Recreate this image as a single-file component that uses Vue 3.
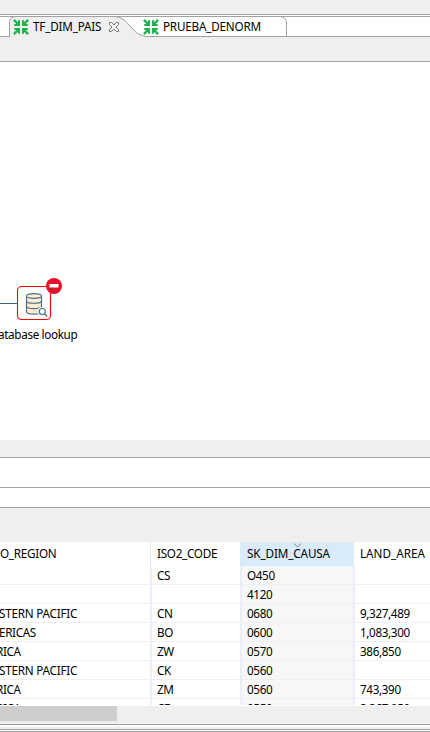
<script setup>
const columns = [
  { key: 'region', label: 'O_REGION' },
  { key: 'iso', label: 'ISO2_CODE' },
  { key: 'sk', label: 'SK_DIM_CAUSA', sorted: true },
  { key: 'area', label: 'LAND_AREA' },
]
const rows = [
  { region: '', iso: 'CS', sk: 'O450', area: '' },
  { region: '', iso: '', sk: '4120', area: '' },
  { region: 'STERN PACIFIC', iso: 'CN', sk: '0680', area: '9,327,489' },
  { region: 'ERICAS', iso: 'BO', sk: '0600', area: '1,083,300' },
  { region: 'RICA', iso: 'ZW', sk: '0570', area: '386,850' },
  { region: 'STERN PACIFIC', iso: 'CK', sk: '0560', area: '' },
  { region: 'RICA', iso: 'ZM', sk: '0560', area: '743,390' },
  { region: 'RICA', iso: 'CF', sk: '0550', area: '2,267,050' },
]
const arrows = [0, 90, 180, 270]
</script>

<template>
  <main class="app">
    <div class="top-strip"></div>
    <nav class="tabs">
      <svg class="tab-shape" width="430" height="22" viewBox="0 0 430 22">
        <path d="M0 .5H430" stroke="#a0a0a0" fill="none" />
        <path d="M9.500 21V7Q9.500 .5 16 .5H115C130 2 131 19 146 20.500V21Z" fill="#efefef" />
        <path d="M0 20.500H9.500V7Q9.500 .5 16 .5H115C130 2 131 19 146 20.500H430M280 .5Q286.500 1.500 286.500 7V20" fill="none" stroke="#a0a0a0" />
      </svg>
      <div class="tab first">
        <svg class="arrows" width="16" height="16" viewBox="0 0 16 16">
          <g v-for="a in arrows" :key="a" :transform="`rotate(${a} 8 8)`" fill="#22b14c">
            <path d="M0 1.700L1.700 0L5 3.300V1.300H7V7H1.300V5H3.300Z" />
          </g>
        </svg>
        <span class="tab-label">TF_DIM_PAIS</span>
        <svg class="close" width="12" height="12" viewBox="0 0 12 12">
          <path d="M1.500 1.500H3.500L6 4L8.500 1.500H10.500V3.500L8 6L10.500 8.500V10.500H8.500L6 8L3.500 10.500H1.500V8.500L4 6L1.500 3.500Z" fill="#fff" stroke="#777" />
        </svg>
      </div>
      <div class="tab second">
        <svg class="arrows" width="16" height="16" viewBox="0 0 16 16">
          <g v-for="a in arrows" :key="a" :transform="`rotate(${a} 8 8)`" fill="#22b14c">
            <path d="M0 1.700L1.700 0L5 3.300V1.300H7V7H1.300V5H3.300Z" />
          </g>
        </svg>
        <span class="tab-label">PRUEBA_DENORM</span>
      </div>
    </nav>
    <div class="toolbar"></div>
    <section class="canvas">
      <svg class="step" width="70" height="60" viewBox="0 270 70 60">
        <path d="M0 303.500H17" stroke="#3d6480" />
        <rect x="17.500" y="286.500" width="33" height="33" rx="4" fill="#fff" stroke="#ff0000" stroke-width="1.100" />
        <path d="M26.500 296V311.500C26.500 315 41.500 315 41.500 311.500V296" fill="#ffebcd" stroke="#4c718e" stroke-width="1.200" />
        <ellipse cx="34" cy="296" rx="7.500" ry="2.300" fill="#ffebcd" stroke="#4c718e" stroke-width="1.200" />
        <path d="M26.500 301C26.500 304 41.500 304 41.500 301M26.500 306C26.500 309.500 41.500 309.500 41.500 306" fill="none" stroke="#4c718e" stroke-width="1.200" />
        <circle cx="42.300" cy="311.500" r="4.500" fill="#fff" />
        <circle cx="42.300" cy="311.500" r="3" fill="#fff" stroke="#4c718e" stroke-width="1.200" />
        <path d="M44.500 313.800L47.200 316.500" stroke="#4c718e" stroke-width="1.300" />
        <circle cx="54" cy="286" r="8" fill="#e8112d" />
        <rect x="49.500" y="284" width="9" height="3.500" fill="#fff" />
      </svg>
      <span class="step-label">atabase lookup</span>
    </section>
    <div class="sash"></div>
    <div class="panel-title"></div>
    <div class="panel-tabs"></div>
    <div class="panel-tools"></div>
    <section class="grid">
      <div class="row head">
        <div v-for="c in columns" :key="c.key" :class="['cell', c.key]">
          <svg v-if="c.sorted" class="sort" width="9" height="5" viewBox="0 0 9 5"><path d="M1 .5L4.500 4L8 .5" fill="none" stroke="#808080" /></svg>
          <span>{{ c.label }}</span>
        </div>
      </div>
      <div v-for="(r, i) in rows" :key="i" :class="['row', { africa: r.region === 'RICA', pacific: r.region.startsWith('STERN') }]">
        <div v-for="c in columns" :key="c.key" :class="['cell', c.key]"><span>{{ r[c.key] }}</span></div>
      </div>
    </section>
    <div class="scroll"><div class="thumb"></div></div>
    <div class="bottom"></div>
    <div class="edge"></div>
  </main>
</template>

<style>
body { margin: 0; overflow: hidden; }
</style>
<style scoped>
* { box-sizing: border-box; }
.app { width: 430px; height: 732px; overflow: hidden; background: #efefef; color: #000; font: 11.7px/16px "Noto Sans", sans-serif; white-space: nowrap; }
.app svg { display: block; flex: none; }
.top-strip { height: 16px; border-bottom: 1px solid #fff; box-shadow: inset 0 -1px #a0a0a0; }
.tabs { position: relative; height: 21px; background: #fff; display: flex; }
.tab-shape { position: absolute; left: 0; top: 0; }
.tab { position: relative; display: flex; padding-top: 3px; }
.first { margin-left: 13px; width: 130px; }
.tab-label { margin: -1px 0 0 4px; letter-spacing: -.2px; }
.first .tab-label { width: 71px; }
.close { margin: 2px 0 0 4px; }
.toolbar { height: 25px; border-bottom: 1px solid #a0a0a0; }
.canvas { height: 378px; background: #fff; padding-top: 208px; }
.step-label { display: block; margin-top: -4px; margin-left: -2px; letter-spacing: -.34px; }
.sash { height: 17px; }
.panel-title { height: 31px; background: #fff; border: solid #a0a0a0; border-width: 1px 0; }
.panel-tabs { height: 20px; background: #fff; border-bottom: 1px solid #a0a0a0; }
.panel-tools { height: 34px; }
.grid { height: 164px; background: #fff; overflow: hidden; border-bottom: 1px solid #fff; }
.row { display: grid; grid-template-columns: 152px 90px 113px 75px; height: 19px; }
.row.head { grid-template-columns: 151px 89px 114px 76px; height: 24px; }
.cell { border-right: 2px solid #e9eef7; border-bottom: 1px solid #efefef; padding-left: 5px; line-height: 18px; letter-spacing: -.36px; overflow: hidden; }
.cell.region { padding-left: 0; }
.row:not(.head) .region span { margin-left: -1px; }
.row.africa .region span { margin-left: -4px; }
.row.pacific .region { letter-spacing: -.22px; }
.cell.area { border-right: 0; }
.cell.sk { background: #f7f7f7; }
.head .cell { border-bottom: 0; border-right: 0; padding-left: 6px; line-height: 23px; letter-spacing: -.28px; }
.head .cell.region { padding-left: 0; }
.head .region { box-shadow: inset -1px 0 #e5e5e5; }
.head .cell.sk { position: relative; padding-left: 7px; background: #d9ebf9; letter-spacing: -.12px; }
.head .cell.area { letter-spacing: -.28px; }
.head .cell.area span { letter-spacing: 0; }
.sort { position: absolute; left: 53px; top: 1px; }
.scroll { height: 15px; }
.thumb { width: 117px; height: 15px; background: #cdcdcd; }
.bottom { height: 4px; border-bottom: 1px solid #a0a0a0; }
.edge { height: 7px; background: linear-gradient(#fff 2px, #efefef 2px 4px, #a0a0a0 4px 5px, #fff 5px 6px, #a0a0a0 6px); }
</style>
